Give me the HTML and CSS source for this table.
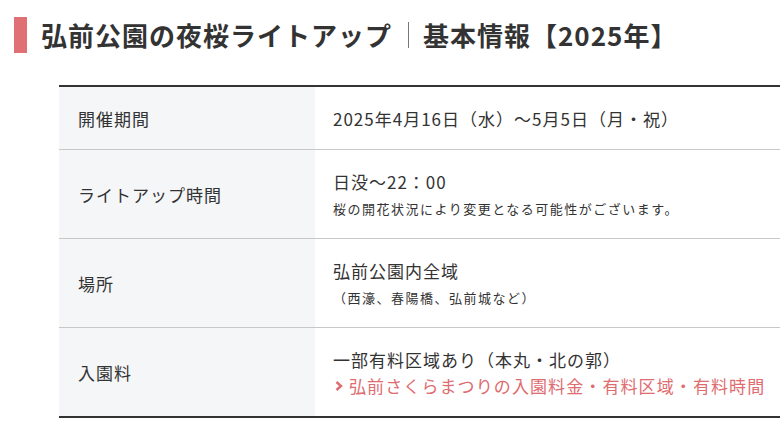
FILE: index.html
```html
<!DOCTYPE html>
<html lang="ja">
<head>
<meta charset="utf-8">
<link rel="stylesheet" href="styles.css">
</head>
<body>
<div class="page">
  <h2 class="title">弘前公園の夜桜ライトアップ<span class="sep"></span>基本情報【2025年】</h2>
  <table class="info">
    <tr>
      <th>開催期間</th>
      <td><p class="main">2025年4月16日（水）～5月5日（月・祝）</p></td>
    </tr>
    <tr>
      <th>ライトアップ時間</th>
      <td><p class="main">日没～22：00</p><p class="note">桜の開花状況により変更となる可能性がございます。</p></td>
    </tr>
    <tr>
      <th>場所</th>
      <td><p class="main">弘前公園内全域</p><p class="note">（西濠、春陽橋、弘前城など）</p></td>
    </tr>
    <tr>
      <th>入園料</th>
      <td><p class="main">一部有料区域あり（本丸・北の郭）</p><a class="link" href="#"><svg class="chev" viewBox="0 0 8 10" width="8" height="10"><path d="M1.5 1 L6 5 L1.5 9" fill="none" stroke="currentColor" stroke-width="2.4"/></svg>弘前さくらまつりの入園料金・有料区域・有料時間</a></td>
    </tr>
  </table>
</div>
</body>
</html>
```
FILE: styles.css
```css
* { box-sizing: border-box; }
html, body { margin: 0; padding: 0; background: #fff; }
body {
  font-family: "Noto Sans CJK JP", "Noto Sans", sans-serif;
  color: #333;
  overflow: hidden;
}
.page {
  width: 780px;
  padding: 17px 0 0 14px;
}
.title {
  margin: 0;
  font-size: 26px;
  font-weight: 700;
  line-height: 36px;
  letter-spacing: 1px;
  color: #333;
  border-left: 13px solid #df7073;
  padding-left: 14px;
  height: 36px;
  display: flex;
  align-items: center;
}
.sep {
  display: inline-block;
  width: 1px;
  height: 26px;
  background: #777;
  margin: 0 14px 0 16px;
}
.info {
  margin: 32px 0 0 45px;
  border-collapse: collapse;
  width: 740px;
  border-top: 2px solid #333;
  border-bottom: 2px solid #333;
}
.info th, .info td {
  border-top: 1px solid #c8c8c8;
  padding: 18px 18px 17px;
  text-align: left;
  vertical-align: middle;
  font-size: 17px;
  letter-spacing: 1px;
  font-weight: 400;
}
.info th {
  width: 256px;
  background: #f5f6f8;
  padding-left: 19px;
  height: 62px;
}
.main { margin: 0; line-height: 27px; }
.note {
  margin: 1px 0 0;
  font-size: 13px;
  line-height: 25px;
  letter-spacing: 1.5px;
}
.link {
  display: flex;
  align-items: center;
  color: #de6c70;
  text-decoration: none;
  line-height: 26px;
  white-space: nowrap;
  letter-spacing: 1.1px;
}
.chev { margin: 0 6px 0 2px; flex: none; }
```
